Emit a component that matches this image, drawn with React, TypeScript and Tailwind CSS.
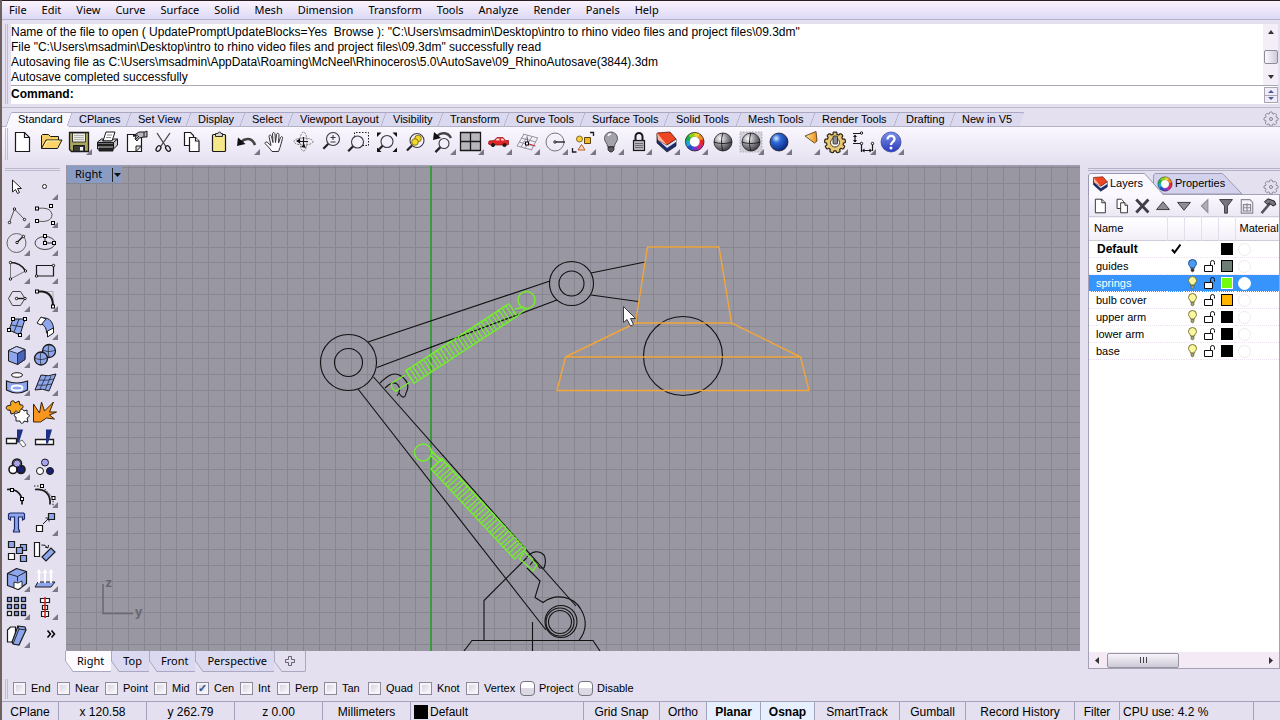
import React from "react";

const menus = ["File", "Edit", "View", "Curve", "Surface", "Solid", "Mesh", "Dimension", "Transform", "Tools", "Analyze", "Render", "Panels", "Help"];

const history = [
  'Name of the file to open ( UpdatePromptUpdateBlocks=Yes  Browse ): "C:\\Users\\msadmin\\Desktop\\intro to rhino video files and project files\\09.3dm"',
  'File "C:\\Users\\msadmin\\Desktop\\intro to rhino video files and project files\\09.3dm" successfully read',
  "Autosaving file as C:\\Users\\msadmin\\AppData\\Roaming\\McNeel\\Rhinoceros\\5.0\\AutoSave\\09_RhinoAutosave(3844).3dm",
  "Autosave completed successfully",
];

const toolTabs: [string, string][] = [
  ["Standard", "w-[61px]"],
  ["CPlanes", "w-[59px]"],
  ["Set View", "w-[60px]"],
  ["Display", "w-[54px]"],
  ["Select", "w-[48px]"],
  ["Viewport Layout", "w-[93px]"],
  ["Visibility", "w-[57px]"],
  ["Transform", "w-[66px]"],
  ["Curve Tools", "w-[76px]"],
  ["Surface Tools", "w-[84px]"],
  ["Solid Tools", "w-[72px]"],
  ["Mesh Tools", "w-[74px]"],
  ["Render Tools", "w-[84px]"],
  ["Drafting", "w-[56px]"],
  ["New in V5", "w-[68px]"],
];

type IconDef = { name: string; menu?: boolean; art: React.ReactNode };

function IconButton({ icon }: { icon: IconDef }) {
  return (
    <button type="button" aria-label={icon.name} className="size-7 shrink-0">
      <svg viewBox="0 0 28 28" className="size-7" fill="none" stroke="#1a1a1a">
        {icon.art}
        {icon.menu && <path d="M28 21v6h-6z" fill="#7b7886" stroke="none" />}
      </svg>
    </button>
  );
}

function Node({ x, y }: { x: number; y: number }) {
  return <rect x={x - 1.5} y={y - 1.5} width="3" height="3" fill="#fff" stroke="#000" />;
}
function Dot({ x, y }: { x: number; y: number }) {
  return <circle cx={x} cy={y} r="1.2" fill="#fff" stroke="#000" strokeWidth="0.9" />;
}
function Lens({ x, y, r = 6 }: { x: number; y: number; r?: number }) {
  const d = r * 0.72;
  return (
    <>
      <path d={`M${x - d} ${y + d}L${x - d - 5} ${y + d + 5}`} stroke="#222" strokeWidth="2.2" />
      <circle cx={x} cy={y} r={r} fill="#f3effa" stroke="#3b3b44" strokeWidth="1.1" />
    </>
  );
}
function ColorWheel({ cx, cy, r, w }: { cx: number; cy: number; r: number; w: number }) {
  const colors = ["#f2d21c", "#f08a1c", "#e5262a", "#d81e8c", "#7a35c8", "#2750d8", "#16a8d8", "#18b04a", "#8ad01c"];
  return (
    <>
      <circle cx={cx} cy={cy} r={r - w / 2} stroke="#555" strokeWidth="0.6" fill="#fff" />
      {colors.map((c, i) => {
        const a0 = (-95 + i * 40) * (Math.PI / 180);
        const a1 = (-52 + i * 40) * (Math.PI / 180);
        return (
          <path
            key={c}
            d={`M${cx + r * Math.cos(a0)} ${cy + r * Math.sin(a0)}A${r} ${r} 0 0 1 ${cx + r * Math.cos(a1)} ${cy + r * Math.sin(a1)}`}
            stroke={c}
            strokeWidth={w}
          />
        );
      })}
      <circle cx={cx} cy={cy} r={r + w / 2} stroke="#222" strokeWidth="0.8" />
    </>
  );
}
function LayerStack() {
  return (
    <>
      <path d="M5 6v9l10 9 9-6v-7z" fill="#1c2c6e" stroke="#222" strokeWidth="0.8" />
      <path d="M6 12l9 8 9-6v-3l-9 6-8-5z" fill="#dfe4f2" stroke="none" />
      <path d="M5 5l13-1 6 7-9 6-9-5z" fill="#ee4622" stroke="#5a1a10" strokeWidth="0.8" />
      <path d="M5 5l10 12-9-5z" fill="#f9b8a4" stroke="none" />
    </>
  );
}
function PageIcon() {
  return (
    <>
      <path d="M7.500 4.500h9l5 5v14h-14z" fill="#fff" strokeWidth="1.200" />
      <path d="M16.500 4.500v5h5" strokeWidth="1.200" />
    </>
  );
}
function CopyIcon() {
  return (
    <g fill="#fff" strokeWidth="1.200">
      <path d="M8.500 4.500h6l3 3v10h-9z" />
      <path d="M13.500 9.500h6l3.500 3.500v10.500h-9.500z" />
      <path d="M19.500 9.500v3.500h3.500" />
    </g>
  );
}
function Ball({ fill }: { fill: string }) {
  return <circle cx="15" cy="14" r="9" fill={fill} stroke="#1c1c22" strokeWidth="0.8" />;
}
function Gear({ cx, cy, r, teeth }: { cx: number; cy: number; r: number; teeth: number }) {
  const pitch = (Math.PI * 2) / teeth;
  const profile: [number, number][] = [
    [-0.34, 0.8],
    [-0.26, 0.96],
    [-0.16, 1],
    [0.16, 1],
    [0.26, 0.96],
    [0.34, 0.8],
  ];
  const pts: string[] = [];
  for (let k = 0; k < teeth; k++) {
    for (const [offset, scale] of profile) {
      const a = (k + offset) * pitch - Math.PI / 2;
      pts.push(`${cx + r * scale * Math.cos(a)},${cy + r * scale * Math.sin(a)}`);
    }
  }
  return <polygon points={pts.join(" ")} strokeLinejoin="round" />;
}

const toolbar: IconDef[] = [
  { name: "New", art: <PageIcon /> },
  {
    name: "Open",
    art: (
      <g strokeLinejoin="round">
        <path d="M5.500 20.500v-13l1-1h6l2 2h8v4" fill="#f6cf62" />
        <path d="M5.500 20.500l4.500-8.500h16l-4.500 8.500z" fill="#fcd368" />
        <path d="M8 19l3-6h12" stroke="#fff0b8" />
      </g>
    ),
  },
  {
    name: "Save",
    menu: true,
    art: (
      <>
        <path d="M5.500 4.500h19v19h-17l-2-2z" fill="#aaa55e" strokeWidth="1.300" />
        <path d="M8.500 5h13v9h-13z" fill="#ecebe4" strokeWidth="0.800" />
        <path d="M10 7.500h10M10 9.500h10M10 11.500h10" stroke="#a8a8a0" strokeWidth="0.800" />
        <path d="M9.500 17.500h11v6h-11z" fill="#3a3a34" />
        <path d="M16 19h3v3.500h-3z" fill="#eee" stroke="none" />
      </>
    ),
  },
  {
    name: "Print",
    art: (
      <g strokeLinejoin="round">
        <path d="M11 13l3-9h9l-3 9z" fill="#fff" />
        <path d="M15 7h5M14 9.500h5" stroke="#888" />
        <path d="M5.500 14l4-3h2l-1 2h9l2-2h4v6l-4 4h-16z" fill="#c8c8cc" />
        <path d="M5.500 14.500h16l4-3.500M21.500 14.500v6.500" />
        <path d="M5.500 16h16v2h-16zM7 20h14v3h-14z" fill="#222" />
      </g>
    ),
  },
  {
    name: "Document properties",
    art: (
      <>
        <path d="M7.500 6.500h14v17h-14z" fill="#fff" strokeWidth="1.200" />
        <path d="M16 23.500l5.500-5.500h-5.500z" fill="#ddd" />
        <path d="M13 8l6-4h6l2-1v6h-3l-5 1-2 3-2-2 1-3z" fill="#b9b7c0" />
        <path d="M13 8l5-1M16 11l3-3M24 4v5" />
      </>
    ),
  },
  {
    name: "Cut",
    art: (
      <>
        <path d="M9 5l8.500 13M22 5l-9 13" stroke="#444" strokeWidth="1.300" />
        <ellipse cx="10.500" cy="20.500" rx="2" ry="3" transform="rotate(35 10.500 20.500)" strokeWidth="1.300" />
        <ellipse cx="20" cy="20.500" rx="2" ry="3" transform="rotate(-35 20 20.500)" strokeWidth="1.300" />
      </>
    ),
  },
  { name: "Copy", art: <CopyIcon /> },
  {
    name: "Paste",
    art: (
      <>
        <rect x="8.500" y="6.500" width="13" height="17" rx="1" fill="#f7e98a" strokeWidth="1.200" />
        <path d="M11.500 8.500v-3h2.500a1.500 1.500 0 0 1 3 0h1.500v3z" fill="#d8d4dc" strokeWidth="0.900" />
      </>
    ),
  },
  {
    name: "Undo",
    menu: true,
    art: (
      <>
        <path d="M9 14c4-4 11-5 14 3" strokeWidth="2.600" stroke="#444" />
        <path d="M5 18l1-8.500 7.500 6.500z" fill="#111" stroke="none" />
      </>
    ),
  },
  {
    name: "Pan",
    art: (
      <path
        d="M12 23.500c-2-3-5-6-7-8 0-2 2-2 3-.5l3 2.500-2-9c0-2 2-2 2.500 0l1.500 6-.5-8.500c0-2 2-2 2.500 0l.5 8.500 1-8c.5-2 2.500-1.500 2.500.5l-.5 8 2-5.500c1-1.500 2.500-1 2 1l-2.500 9-1.500 4z"
        fill="#fbf9ff"
        stroke="#333"
        strokeLinejoin="round"
      />
    ),
  },
  {
    name: "Rotate view",
    art: (
      <>
        <ellipse cx="15.500" cy="13.500" rx="9.500" ry="3.500" stroke="#777" strokeDasharray="2 1" />
        <ellipse cx="15.500" cy="13.500" rx="3.500" ry="9.500" stroke="#777" strokeDasharray="2 1" />
        <path d="M15.500 9v9M11 13.500h9" strokeWidth="1.200" />
        <path d="M8 13l4-2.500v5zM18 20l-5-1 3-3z" fill="#111" stroke="none" />
      </>
    ),
  },
  {
    name: "Zoom dynamic",
    art: (
      <>
        <Lens x={17} y={11} r={6.500} />
        <path d="M17 7v5M14.500 9.500h5M14.500 14h5" stroke="#333" />
      </>
    ),
  },
  {
    name: "Zoom window",
    art: (
      <>
        <path d="M10.500 12v-7.500h14v13h-6" strokeDasharray="1.500 1.500" />
        <Lens x={13.500} y={14} />
      </>
    ),
  },
  {
    name: "Zoom extents",
    art: (
      <>
        <Lens x={15} y={13.500} />
        <path d="M5 4.500h4.500l-4.500 4.500zM25 4.500h-4.500l4.500 4.500zM5 24v-4.500l4.500 4.500zM25 24v-4.500l-4.500 4.500z" fill="#111" stroke="none" />
      </>
    ),
  },
  {
    name: "Zoom selected",
    art: (
      <>
        <Lens x={17} y={12.500} r={7} />
        <circle cx="18" cy="10.500" r="3.300" fill="#f4d92c" stroke="#6a5c00" strokeWidth="0.800" />
        <circle cx="15" cy="14" r="3.300" fill="#f4d92c" stroke="#6a5c00" strokeWidth="0.800" />
      </>
    ),
  },
  {
    name: "Undo view",
    menu: true,
    art: (
      <>
        <Lens x={16} y={15.500} r={5} />
        <path d="M9 8c4-4 11-4 14 2" strokeWidth="2.400" stroke="#444" />
        <path d="M5 12l1-8 7 6z" fill="#111" stroke="none" />
      </>
    ),
  },
  {
    name: "Four viewports",
    menu: true,
    art: (
      <>
        <path d="M4.500 4.500h20v18h-20z" fill="#b8b6bd" strokeWidth="1.300" />
        <path d="M14.500 4.500v18M4.500 13.500h20" strokeWidth="1.300" />
      </>
    ),
  },
  {
    name: "Named view car",
    menu: true,
    art: (
      <>
        <path d="M4.500 16l.5-3 5-.5 3-3h6l2.500 3h3v4l-2 .5h-16z" fill="#e02626" stroke="#8a1010" strokeWidth="0.700" />
        <path d="M13 10.500h2.500v2h-4zM17 10.500h2l1.500 2h-3.500z" fill="#f6d8d8" stroke="none" />
        <circle cx="9" cy="17" r="1.600" fill="#222" />
        <circle cx="20.500" cy="17" r="1.600" fill="#222" />
      </>
    ),
  },
  {
    name: "Set CPlane",
    menu: true,
    art: (
      <>
        <path d="M11 6l15 4M9 10l15 4M7 14l15 4M5 18l15 4M12 6l-7 12M16 7l-7 12M20 8.500l-7 12M25.500 10l-6 12" stroke="#8c8a96" strokeWidth="0.900" />
        <path d="M15.500 15.500v-6" stroke="#1d9a30" />
        <path d="M15.500 15.500l8 2.500" stroke="#d22" />
        <rect x="13.500" y="14" width="3" height="3" fill="#fff" stroke="#000" />
      </>
    ),
  },
  {
    name: "Circle",
    menu: true,
    art: (
      <>
        <circle cx="15" cy="14" r="9" stroke="#77757f" />
        <path d="M15 14h10" strokeWidth="1.300" />
        <Dot x={15} y={14} />
      </>
    ),
  },
  {
    name: "Select objects",
    menu: true,
    art: (
      <>
        <path d="M22 4.500h3.500v3.500M4.500 20v4h4" strokeWidth="1.300" />
        <circle cx="11.500" cy="11" r="3" fill="#f7d23a" stroke="#7a5a10" strokeWidth="0.900" />
        <path d="M16.500 9.500h6v6h-6z" fill="#f5b921" stroke="#5a4210" />
        <path d="M13.500 16.500l3.500 5.500h-7z" fill="#f9d8c0" stroke="#b06028" />
      </>
    ),
  },
  {
    name: "Hide",
    menu: true,
    art: (
      <>
        <path d="M8.500 10.500a6.500 6.500 0 1 1 13 0c0 3.500-3 4.500-3 8h-7c0-3.500-3-4.500-3-8z" fill="#a3a2aa" stroke="#55545c" />
        <path d="M12 19h6v3l-2 2h-2l-2-2z" fill="#5c5b62" strokeWidth="0.700" />
        <path d="M12 8c.5-1.500 1.500-2 3-2" stroke="#fff" strokeWidth="1.300" />
      </>
    ),
  },
  {
    name: "Lock",
    menu: true,
    art: (
      <>
        <path d="M11.500 13v-4.500a3.500 3.500 0 0 1 7 0v4.500" strokeWidth="2" />
        <rect x="9.500" y="12.500" width="11" height="10" fill="#b9b8c0" strokeWidth="1.200" />
        <path d="M11 15.500h8M11 17.500h8M11 19.500h8" stroke="#6c6b74" />
      </>
    ),
  },
  { name: "Layers", menu: true, art: <LayerStack /> },
  { name: "Properties", menu: true, art: <ColorWheel cx={14.700} cy={13.700} r={7.300} w={4} /> },
  {
    name: "Shade",
    art: (
      <>
        <Ball fill="url(#grayBall)" />
        <path d="M15 5c-2 5-2 13 0 18M6 14c5 2 13 2 18 0" strokeWidth="0.900" />
      </>
    ),
  },
  {
    name: "Shade viewport",
    menu: true,
    art: (
      <>
        <path d="M4 4h22v20h-22z" fill="#d3d0da" stroke="#a9a6b0" strokeDasharray="1.500 1.500" />
        <Ball fill="url(#grayBall)" />
        <path d="M15 5c-2 5-2 13 0 18M6 14c5 2 13 2 18 0" strokeWidth="0.900" />
      </>
    ),
  },
  { name: "Render", menu: true, art: <Ball fill="url(#blueBall)" /> },
  {
    name: "Spotlight",
    menu: true,
    art: <path d="M13 8l11-4.500 1 9.500-2.500 2z" fill="url(#coneFill)" stroke="#5a4020" strokeWidth="0.900" />,
  },
  {
    name: "Options",
    menu: true,
    art: (
      <>
        <g fill="#e8c876" stroke="#2c2410" strokeWidth="1.200">
          <Gear cx={15} cy={14.500} r={10.500} teeth={9} />
        </g>
        <circle cx="15" cy="14.500" r="4.500" fill="#fff" stroke="#4a3a18" />
        <rect x="13" y="8" width="4.500" height="8" rx="1" fill="#8d8c90" strokeWidth="0.800" />
      </>
    ),
  },
  {
    name: "Dimension",
    menu: true,
    art: (
      <>
        <path d="M5 5.500h8M7 8v6M5 15.500h8M13.500 16v8M24.500 16v7M15 22.500h8" strokeWidth="1.200" />
        <path d="M7 6.500l2 2.500h-4zM7 14.500l2-2.500h-4zM14 22.500l2.500-2v4zM24 22.500l-2.500-2v4z" fill="#111" stroke="none" />
        <Dot x={13.500} y={5} />
        <Dot x={13.500} y={15.500} />
        <Dot x={24.500} y={15.500} />
      </>
    ),
  },
  {
    name: "Help",
    menu: true,
    art: (
      <>
        <circle cx="15" cy="14" r="10" fill="url(#helpBall)" stroke="#2c3c9c" strokeWidth="0.700" />
        <path d="M11.500 11.500c0-5 7.500-4.500 7 0-.3 2.500-3.500 2.500-3.500 5.500" stroke="#fff" strokeWidth="2.300" />
        <circle cx="15" cy="20" r="1.500" fill="#fff" stroke="none" />
      </>
    ),
  },
];

const BLUE = "#8ea6ee";

const toolbox: IconDef[] = [
  { name: "Select", art: <path d="M10.500 7v12l3-2.500 2 4 2-1-2-4h4z" fill="#fff" stroke="#222" /> },
  { name: "Point", menu: true, art: <circle cx="14.500" cy="13.500" r="2" fill="#fff" stroke="#222" /> },
  {
    name: "Polyline",
    menu: true,
    art: (
      <>
        <path d="M7.500 21.500l5-13.500 10 10.500" stroke="#555" />
        <Dot x={7.500} y={21.500} />
        <Dot x={12.500} y={8} />
        <Dot x={22.500} y={18.500} />
      </>
    ),
  },
  {
    name: "Control point curve",
    menu: true,
    art: (
      <>
        <path d="M7 7.500c8-1 14 0 15 6 0 6-6 8-15 6.500" stroke="#555" />
        <Node x={7} y={7.500} />
        <Node x={21} y={5} />
        <Node x={7} y={20} />
        <Node x={23} y={22} />
      </>
    ),
  },
  {
    name: "Circle",
    menu: true,
    art: (
      <>
        <circle cx="14.500" cy="14" r="9.500" stroke="#666" />
        <path d="M15 13.500l6-6" strokeWidth="1.200" />
        <Dot x={15} y={13.500} />
        <Dot x={21.500} y={7.500} />
      </>
    ),
  },
  {
    name: "Ellipse",
    menu: true,
    art: (
      <>
        <ellipse cx="15" cy="14" rx="10" ry="6.500" stroke="#444" />
        <path d="M15 7v7h9" />
        <Node x={15} y={7} />
        <Node x={15} y={14} />
        <Node x={24} y={14} />
      </>
    ),
  },
  {
    name: "Arc",
    menu: true,
    art: (
      <>
        <path d="M23.500 14l-15 8v-16.500" stroke="#777" />
        <path d="M8.500 5.500q10 0 15 8.500" strokeWidth="1.500" />
        <Dot x={8.500} y={5.500} />
        <Dot x={23.500} y={14} />
        <Dot x={8.500} y={22} />
      </>
    ),
  },
  {
    name: "Rectangle",
    menu: true,
    art: (
      <>
        <path d="M6.500 8.500h17v10.500h-17z" strokeWidth="1.200" />
        <Dot x={23.500} y={8.500} />
        <Dot x={6.500} y={19} />
      </>
    ),
  },
  {
    name: "Polygon",
    menu: true,
    art: (
      <>
        <path d="M6.500 13.500l4-7h8l4.500 7-4.500 7h-8z" stroke="#444" />
        <path d="M14.500 13.500h8" strokeWidth="1.400" />
        <Dot x={14.500} y={13.500} />
        <Dot x={23} y={13.500} />
      </>
    ),
  },
  {
    name: "Fillet curves",
    menu: true,
    art: (
      <>
        <path d="M7 6.500h16v15" stroke="#aaa" />
        <path d="M7 6.500h5q11 1 11 15" strokeWidth="2" />
        <Node x={7} y={6.500} />
        <Node x={23} y={21.500} />
      </>
    ),
  },
  {
    name: "Surface from points",
    menu: true,
    art: (
      <>
        <path d="M11 6l12 0-5 16-11-5z" fill={BLUE} />
        <path d="M17 6l-5 13M9 12l12 2" strokeWidth="0.800" />
        <Node x={11} y={6} />
        <Node x={23} y={6} />
        <Node x={7} y={17} />
        <Node x={18} y={22} />
      </>
    ),
  },
  {
    name: "Surface from curves",
    menu: true,
    art: (
      <>
        <path d="M12 5c8-1 12 5 11.500 13l-7 2c0-6-3-9-8-10z" fill={BLUE} />
        <path d="M11 4l5 2-5 6-4-2zM23.500 15v5l-6 4v-6z" fill="#fff" />
      </>
    ),
  },
  {
    name: "Box",
    menu: true,
    art: (
      <g strokeLinejoin="round">
        <path d="M6.500 9.500l8-4 8.500 3v10l-7.500 5-9-3.500z" fill={BLUE} />
        <path d="M6.500 9.500l9 3 7.500-4-8.500-3z" fill="#c3cef8" strokeWidth="0.800" />
        <path d="M15.500 12.500v11l7.500-5v-10z" fill="#4a62b8" strokeWidth="0.800" />
      </g>
    ),
  },
  {
    name: "Boolean union",
    menu: true,
    art: (
      <>
        <circle cx="19" cy="10" r="6.500" fill={BLUE} strokeWidth="1.300" />
        <circle cx="11" cy="17.500" r="6.500" fill={BLUE} strokeWidth="1.300" />
        <path d="M5 17c4 2 8 2 12 0M11 11c-1 4-1 9 0 13M13 9c4 2 8 2 12 0M19 4c-1 3-1 8 0 12" strokeWidth="0.700" />
      </>
    ),
  },
  {
    name: "Curve from object",
    menu: true,
    art: (
      <>
        <ellipse cx="15" cy="6" rx="5.500" ry="2.300" fill="#fff" />
        <path d="M4.500 12q10 4 21 0v9q-10 6-21 0z" fill={BLUE} strokeWidth="1.200" />
        <ellipse cx="15" cy="19" rx="5.500" ry="2.500" fill={BLUE} stroke="#fff" strokeWidth="1.800" />
      </>
    ),
  },
  {
    name: "Mesh",
    menu: true,
    art: (
      <>
        <path d="M11 6q7 2 15-1l-7 17q-6-3-14-1z" fill={BLUE} />
        <path d="M9 11q7 1 15-1M7 16q7 1 15-1M16 7l-6 13M21 7l-6 14" strokeWidth="0.700" />
      </>
    ),
  },
  {
    name: "Join",
    art: (
      <g strokeLinejoin="round">
        <path d="M5 9l4-1c-2-4 3-6 4-2l4-2 1 4c4-1 4 3 1 4l1 4-4 0c-1-3-4-2-3 0l-4 1-1-4c-3 1-5-2-3-4z" fill="#f6a61c" />
        <path d="M15 16l3-1c-1-3 3-4 4-1l3-1 0 4c3 0 3 3 0 4l1 4-4-1c0 3-4 3-4 0l-4 0 0-4c-2 0-3-3 1-4z" fill="#fff" />
      </g>
    ),
  },
  { name: "Explode", art: <path d="M3.500 25v-18l6 9 2-11 3 9 9-9-4 10 7 0-7 3 5 4-8-1-6 4z" fill="#f7951e" stroke="#3a2408" /> },
  {
    name: "Trim",
    art: (
      <>
        <path d="M4.500 13.500h10v5h-10z" fill="#fff" strokeWidth="1.300" />
        <path d="M15 4.500h6l-4 13h-2z" fill="#1e2f86" stroke="none" />
        <path d="M17 17l3-2 4 5-3 2z" fill="#fff" stroke="#666" />
      </>
    ),
  },
  {
    name: "Split",
    art: (
      <>
        <path d="M5.500 14.500h18v5h-18z" fill="#fff" strokeWidth="1.300" />
        <path d="M16 4.500h6l-4 14h-2z" fill="#1e2f86" stroke="none" />
      </>
    ),
  },
  {
    name: "Group",
    menu: true,
    art: (
      <g strokeWidth="1.600">
        <circle cx="15" cy="10.500" r="4.500" fill="#fff" />
        <circle cx="11" cy="16.500" r="4" fill="#fff" />
        <circle cx="19" cy="16.500" r="4" fill="#1a1f70" />
        <circle cx="15" cy="10.500" r="3.500" fill="#a9a2ee" stroke="#111" strokeWidth="0.800" />
      </g>
    ),
  },
  {
    name: "Ungroup",
    art: (
      <>
        <circle cx="15" cy="9.500" r="3.500" fill="#a9a2ee" />
        <circle cx="10" cy="18" r="3.500" fill="#fff" />
        <circle cx="20" cy="18" r="3.500" fill="#1a1f70" />
      </>
    ),
  },
  {
    name: "Edit points",
    art: (
      <>
        <path d="M5 8.500c10-1 16 5 15 15" strokeWidth="1.700" />
        <Node x={10} y={9} />
        <Node x={20} y={18} />
      </>
    ),
  },
  {
    name: "Control points on",
    menu: true,
    art: (
      <>
        <path d="M5 8.500c10-1 16 5 15 15" strokeWidth="1.700" />
        <path d="M4 5h8l11 12v8" strokeDasharray="1.500 1.500" />
        <Node x={12} y={5} />
        <Node x={23.500} y={17} />
      </>
    ),
  },
  {
    name: "Text",
    art: <path d="M6.500 5l2-1h13l1 1v5l-2 1v-3h-4v12l1 2v1h-6v-1l1-2v-12h-4v3l-2-1z" fill={BLUE} stroke="#1c2a6a" strokeWidth="1.200" />,
  },
  {
    name: "Move",
    menu: true,
    art: (
      <>
        <path d="M13 15l6-6M19 9h-3.500M19 9v3.500" />
        <path d="M6.500 16.500h6v6h-6z" fill="#fff" strokeWidth="1.200" />
        <path d="M18.500 4.500h6v6h-6z" fill={BLUE} strokeWidth="1.200" />
      </>
    ),
  },
  {
    name: "Copy objects",
    art: (
      <g strokeWidth="1.200">
        <path d="M6.500 4.500h6v6h-6zM18.500 7.500h6v6h-6z" fill={BLUE} />
        <path d="M14.500 10.500h6v6h-6zM18.500 18.500h6v6h-6z" fill={BLUE} />
        <path d="M6.500 16.500h6v6h-6z" fill="#fff" />
      </g>
    ),
  },
  {
    name: "Rotate",
    art: (
      <>
        <path d="M4.500 5.500h5v14h-5z" fill="#fff" strokeWidth="1.200" />
        <path d="M11.500 8q4-1 6 3M18 11l-3-1M18 11l.5-3" />
        <path d="M12 20l9-9 4 4-9 9z" fill={BLUE} strokeWidth="1.200" />
      </>
    ),
  },
  {
    name: "Solid edit",
    menu: true,
    art: (
      <g strokeLinejoin="round">
        <path d="M5.500 8.500l9-5 10 3v12l-8 6-11-4z" fill={BLUE} strokeWidth="1.200" />
        <path d="M5.500 8.500l10 3 9-5M15.500 11.500v5" strokeWidth="0.900" />
        <path d="M12 17l4 1 4-2v6l-4 2.500-4-1.500z" fill="#fff" strokeWidth="0.900" />
      </g>
    ),
  },
  {
    name: "Extrude",
    menu: true,
    art: (
      <>
        <path d="M8 17h17l-4 5h-16z" fill={BLUE} />
        <path d="M9 18v-11M15 18v-11M21 18v-11" stroke="#fff" strokeWidth="1.800" />
        <path d="M9 4l2.500 4h-5zM15 4l2.500 4h-5zM21 4l2.500 4h-5z" fill="#fff" stroke="none" />
      </>
    ),
  },
  {
    name: "Array",
    menu: true,
    art: (
      <g strokeWidth="1.300">
        {[5.5, 12.5, 19.5].map((y) =>
          [5.5, 12.5, 19.5].map((x) => (
            <rect key={`${x}-${y}`} x={x} y={y - 1} width="4" height="4" fill={x === 5.5 && y === 19.5 ? "#fff" : BLUE} />
          )),
        )}
      </g>
    ),
  },
  {
    name: "Align",
    menu: true,
    art: (
      <>
        <path d="M10.500 5.500h9v4h-9zM12.500 12.500h5v4h-5zM11.500 18.500h7v5h-7z" fill="#fff" strokeWidth="1.200" />
        <path d="M15 4v21" stroke="#e02020" strokeWidth="1.600" />
      </>
    ),
  },
  {
    name: "Bend",
    menu: true,
    art: (
      <>
        <path d="M5.500 9l3-3h5v12l-3 3h-5z" fill="#fff" strokeWidth="1.200" />
        <path d="M16 5l7 1 1 3-7 15-6-1-1-2z" fill={BLUE} strokeWidth="1.200" />
        <path d="M16 5l1 3 7 1M17 8l-6 15" strokeWidth="0.900" />
      </>
    ),
  },
  {
    name: "More tools",
    art: <path d="M17.500 9.500l3 3.500-3 3.500M21.500 9.500l3 3.500-3 3.500" strokeWidth="1.500" stroke="#000" />,
  },
];

const GRID = 15.91;
const xs = Array.from({ length: 120 }, (_, i) => 431 - 23 * GRID + i * GRID);
const ys = Array.from({ length: 70 }, (_, i) => 167.5 + i * GRID);

function Spring({ x1, y1, x2, y2, half, coils }: { x1: number; y1: number; x2: number; y2: number; half: number; coils: number }) {
  const len = Math.hypot(x2 - x1, y2 - y1);
  const nx = (-(y2 - y1) / len) * half;
  const ny = ((x2 - x1) / len) * half;
  const step = 1 / coils;
  const pts: string[] = [];
  for (let i = 0; i < coils; i++) {
    const a = i * step;
    const b = a + step * 0.55;
    const ax = x1 + (x2 - x1) * a;
    const ay = y1 + (y2 - y1) * a;
    const bx = x1 + (x2 - x1) * b;
    const by = y1 + (y2 - y1) * b;
    pts.push(`M${ax + nx} ${ay + ny}L${ax - nx} ${ay - ny}L${bx - nx} ${by - ny}L${bx + nx} ${by + ny}`);
  }
  return (
    <>
      <path d={pts.join("")} strokeWidth="1.3" />
      <path d={`M${x1 + nx} ${y1 + ny}L${x2 + nx} ${y2 + ny}L${x2 - nx} ${y2 - ny}L${x1 - nx} ${y1 - ny}Z`} />
    </>
  );
}

function Drawing() {
  return (
    <svg className="absolute inset-0 h-full w-full" fill="none" role="img" aria-label="Desk lamp, right view">
      <g transform="translate(-66 -166)">
        <g stroke="#878691" strokeWidth="1" shapeRendering="crispEdges">
          {xs.map((x) => (
            <path key={x} d={`M${x} 165V1280`} />
          ))}
          {ys.map((y) => (
            <path key={y} d={`M66 ${y}H1960`} />
          ))}
        </g>
        <path d="M431 165V1280" stroke="#3b9a3b" strokeWidth="2" />
        <path d="M103 584v29.500h30" stroke="#6a6973" strokeWidth="1.500" />
        <g fill="#66656f" fontSize="13" fontWeight="bold" className="font-['Liberation_Sans',sans-serif]">
          <text x="105.500" y="587">z</text>
          <text x="135" y="616">y</text>
        </g>
        <g stroke="#111" strokeWidth="1.100">
          <circle cx="348.500" cy="362.500" r="28" />
          <circle cx="348.500" cy="362.500" r="14" />
          <circle cx="571.500" cy="283.500" r="22" />
          <circle cx="571.500" cy="283.500" r="12.500" />
          <circle cx="683" cy="356" r="39.500" />
          <path d="M368 342L550 281M377 367.500L557 300" />
          <path d="M591 273L645 262M591 295L638 301.500" />
          <path d="M358 389L546 630M373.500 377L576 606" />
          <path d="M380 383c7-7 14-12 21-7s9 10 5 17c-1 6-4 5-7 0" />
          <path d="M385 388c5-5 10-7 13-3s2 7-1 11" />
          <path d="M464 651l8-10.500h121l7 10.500M484 640v-39.500l43-43M532.500 622v29" />
          <path d="M527 557c5-6 12-7 17-2 2 4 2 8 0 13h-4l-6-8-4 5" />
          <path d="M527 568l13 13-5 16.500 8 5c13-10 31-6 38 7 7 12 5 22-2 31" />
          <circle cx="560" cy="622" r="11.500" />
          <circle cx="560" cy="622" r="14" />
          <circle cx="561" cy="621.500" r="16" />
        </g>
        <g stroke="#74ee2c" strokeWidth="1.400">
          <circle cx="526.500" cy="300" r="8.500" />
          <path d="M515 309l9-2M518 315l9-7M513 312l5 4" />
          <Spring x1={410} y1={377} x2={513} y2={310} half={7.500} coils={15} />
          <path d="M405 375l-13 8c-2 2 1 8 4 8l14-9" />
          <circle cx="423" cy="452.500" r="8.500" />
          <path d="M431 452l11 8M431 456l7 6M430 449l12 13" />
          <Spring x1={436.500} y1={464} x2={520} y2={554} half={7.500} coils={15} />
          <path d="M524 551l13 14-4 6-14-13M520 558l4-5" />
        </g>
        <g stroke="#111" strokeWidth="1" strokeDasharray="2 2" opacity="0.7">
          <path d="M430 347.500L520 314" />
          <path d="M440 452L524 547" />
        </g>
        <g stroke="#f2a63a" strokeWidth="1.400" strokeLinejoin="round">
          <path d="M647.500 247H719l12.500 76H635.500zM635.500 323L565.500 357H800.500L731.500 323M565.500 357L557 390.500H809L800.500 357" />
        </g>
        <path d="M623.500 306.500v16l3.500-3 3.500 6.500 3-1.500-3-6h5z" fill="#fff" stroke="#3a3a44" />
      </g>
    </svg>
  );
}

const layers = [
  { name: "Default", color: "bg-black", current: true },
  { name: "guides", color: "bg-[#6d7d74]", off: true },
  { name: "springs", color: "bg-[#74fa0c]", selected: true },
  { name: "bulb cover", color: "bg-[#ffb400]" },
  { name: "upper arm", color: "bg-black" },
  { name: "lower arm", color: "bg-black" },
  { name: "base", color: "bg-black" },
];

function Bulb({ off }: { off?: boolean }) {
  return (
    <svg viewBox="0 0 11 14" className="mx-auto h-3.5 w-[11px]" fill="none">
      <path d="M1.500 4.500a4 4 0 0 1 8 0c0 2-2 2.500-2 4.500h-4c0-2-2-2.500-2-4.500z" fill={off ? "#4a9cf0" : "#fbf7a0"} stroke={off ? "#1c4a90" : "#77742c"} />
      <path d="M4 9.500h3v2.500l-1.500 1-1.500-1z" fill={off ? "#333" : "#a8a45a"} stroke="#444" strokeWidth="0.500" />
    </svg>
  );
}
function OpenLock({ light }: { light?: boolean }) {
  return (
    <svg viewBox="0 0 12 14" className="mx-auto h-3.5 w-3" fill="none" stroke="#111">
      <path d="M.5 6.500h8v6h-8z" fill={light ? "#fff" : "none"} />
      <path d="M6.500 6.500v-3a2 2 0 0 1 4 0v2" />
    </svg>
  );
}
function GearButton({ label }: { label: string }) {
  return (
    <button type="button" aria-label={label} className="-my-px size-4">
      <svg viewBox="0 0 16 16" className="size-4" fill="none" stroke="#86848f">
        <Gear cx={8} cy={8} r={7} teeth={8} />
        <circle cx="8" cy="8" r="1.500" />
      </svg>
    </button>
  );
}

const layerTools: IconDef[] = [
  { name: "New layer", art: <PageIcon /> },
  { name: "New sublayer", art: <CopyIcon /> },
  { name: "Delete", art: <path d="M6 5l17 18M23 5l-17 18" strokeWidth="4" stroke="#3f3e46" /> },
  { name: "Move up", art: <path d="M14 8l9 11h-18z" fill="#8f8d98" stroke="#333" strokeWidth="1.300" /> },
  { name: "Move down", art: <path d="M14 20l9-11h-18z" fill="#8f8d98" stroke="#333" strokeWidth="1.300" /> },
  { name: "Move to parent", art: <path d="M18 5v18l-9-9z" fill="#aeacb6" stroke="#8f8d98" /> },
  { name: "Filter", art: <path d="M5 5h18l-7 9v10h-4v-10z" fill="#77757f" stroke="#333" strokeWidth="1.300" /> },
  { name: "Columns", art: <path d="M6 5h12l4 4v15h-16zM9 12h10v9h-10zM14 10v12M9 16.500h10" fill="none" stroke="#8a8892" strokeWidth="1.600" /> },
  {
    name: "Tools",
    art: (
      <>
        <path d="M5 24l12-14" strokeWidth="3.500" stroke="#55535c" />
        <path d="M9 8l5-4 9 3 2 5-4 2-5-4-3 2z" fill="#77757f" strokeWidth="1.300" />
      </>
    ),
  },
];

const osnaps: [string, string][] = [
  ["End", "w-[44px]"],
  ["Near", "w-[48px]"],
  ["Point", "w-[49px]"],
  ["Mid", "w-[42px]"],
  ["Cen", "w-[44px]"],
  ["Int", "w-[37px]"],
  ["Perp", "w-[47px]"],
  ["Tan", "w-[44px]"],
  ["Quad", "w-[51px]"],
  ["Knot", "w-[47px]"],
  ["Vertex", "w-[54px]"],
];

const views = ["Right", "Top", "Front", "Perspective"];

function Gradients() {
  return (
    <svg className="absolute size-0" aria-hidden="true">
      <defs>
        <radialGradient id="grayBall" cx="0.350" cy="0.300" r="0.800">
          <stop offset="0" stopColor="#fff" />
          <stop offset="0.500" stopColor="#8a8990" />
          <stop offset="1" stopColor="#2c2b30" />
        </radialGradient>
        <radialGradient id="blueBall" cx="0.350" cy="0.300" r="0.800">
          <stop offset="0" stopColor="#d8ecff" />
          <stop offset="0.300" stopColor="#2f6ad8" />
          <stop offset="1" stopColor="#061c70" />
        </radialGradient>
        <linearGradient id="helpBall" x1="0" y1="0" x2="0" y2="1">
          <stop offset="0" stopColor="#7c90e8" />
          <stop offset="1" stopColor="#2a3cb8" />
        </linearGradient>
        <linearGradient id="coneFill">
          <stop offset="0" stopColor="#fff0a0" />
          <stop offset="1" stopColor="#f08a18" />
        </linearGradient>
      </defs>
    </svg>
  );
}

function StatusButton({ width, on, children }: { width: string; on?: boolean; children: string }) {
  return (
    <button
      type="button"
      className={`${width} shrink-0 whitespace-nowrap border-r border-[#a3a3be] text-center ${on ? "bg-[#e6f0ff] font-bold" : ""}`}
    >
      {children}
    </button>
  );
}

export default function App() {
  return (
    <div className="flex h-screen min-h-[640px] min-w-[1024px] flex-col overflow-hidden border-l-2 border-[#6d625f] bg-[#e4e0ef] font-['Liberation_Sans',Arial,sans-serif] text-[12px] text-black">
      <Gradients />
      <nav className="flex h-5 shrink-0 items-center gap-px border-t border-b border-t-[#2a2024] border-b-[#b4b3cf] bg-linear-to-b from-[#fbf3fd] to-[#dcd9f5] pt-px font-['Noto_Sans','Open_Sans',sans-serif] text-[11px]">
        {menus.map((m) => (
          <button key={m} type="button" className="px-[7px]">
            {m}
          </button>
        ))}
      </nav>

      <section className="flex shrink-0 border-b border-[#bdbbcf] pt-1 pb-[3px]" aria-label="Command history">
        <div className="mx-[3px] w-[3px] shrink-0 border-x border-[#c0bdd0]" />
        <div className="min-w-0 flex-1 bg-white">
          <div className="flex border-b border-[#a9a7b4]">
            <div className="h-[61px] flex-1 whitespace-pre pt-px text-[12px] leading-[15px]">
              {history.map((line) => (
                <p key={line}>{line}</p>
              ))}
            </div>
            <div className="flex w-[15px] flex-col items-center justify-between bg-[#f3eef7] py-1.5">
              <svg viewBox="0 0 6 4" className="h-1 w-1.5"><path d="M0 4l3-4 3 4z" fill="#333" /></svg>
              <div className="mt-1 h-3.5 w-3.5 rounded-xs border border-[#8e8c98] bg-linear-to-r from-[#fbf9ff] to-[#cfccd8]" />
              <svg viewBox="0 0 6 4" className="h-1 w-1.5"><path d="M0 0l3 4 3-4z" fill="#333" /></svg>
            </div>
          </div>
          <div className="flex h-[18px] items-start">
            <label htmlFor="command" className="font-bold leading-4">Command:</label>
            <input id="command" className="ml-1 h-full min-w-0 flex-1 outline-none" />
            <div className="mt-px flex h-4 w-3.5 flex-col border border-[#a9a7b4] bg-[#f0edf8]">
              <button type="button" aria-label="Previous command" className="flex flex-1 items-center justify-center border-b border-[#a9a7b4]">
                <svg viewBox="0 0 6 3" className="h-[3px] w-1.5"><path d="M0 3l3-3 3 3z" fill="#4a5a9a" /></svg>
              </button>
              <button type="button" aria-label="Next command" className="flex flex-1 items-center justify-center">
                <svg viewBox="0 0 6 3" className="h-[3px] w-1.5"><path d="M0 0l3 3 3-3z" fill="#4a5a9a" /></svg>
              </button>
            </div>
          </div>
        </div>
        <div className="w-0.5" />
      </section>

      <div className="flex shrink-0 items-end pt-1 pr-px">
        <div className="flex h-3.5 flex-1 pl-2 text-[11px]" role="tablist">
          {toolTabs.map(([name, width], i) => (
            <button
              key={name}
              type="button"
              role="tab"
              aria-selected={i === 0}
              className={`${width} relative z-10 shrink-0 whitespace-nowrap pl-2 text-left leading-[15px]`}
            >
              <span
                className={`absolute inset-y-0 -left-0.5 right-0 -z-10 -skew-x-[20deg] rounded-t-xs border-t border-l border-[#a9a8c0] ${i === 0 ? "-bottom-px bg-[#fbf7ff]" : "bg-[#dbd9ef]"}`}
              />
              {name}
            </button>
          ))}
        </div>
        <GearButton label="Toolbar options" />
      </div>
      <div className="flex h-[39px] shrink-0 items-start border-t border-[#b3b1c6] bg-linear-to-b from-[#fbf7ff] to-[#e4e0ef] pt-px">
        <div className="ml-[3px] h-8 w-[3px] shrink-0 border-x border-[#c0bdd0]" />
        {toolbar.map((icon) => (
          <IconButton key={icon.name} icon={icon} />
        ))}
      </div>

      <main className="flex min-h-0 flex-1">
        <div className="w-16 shrink-0 overflow-hidden">
          <div className="mr-1.5 mb-0.5 ml-[3px] mt-[3px] h-[3px] border-y border-[#bdbacd]" />
          <div className="grid w-14 grid-cols-2">
            {toolbox.map((icon) => (
              <IconButton key={icon.name} icon={icon} />
            ))}
          </div>
        </div>

        <div className="flex min-w-0 flex-1 flex-col">
          <div className="relative min-h-0 flex-1 overflow-hidden border-t border-[#a09eb0] bg-[#9897a2]">
            <Drawing />
            <div className="relative ml-px flex h-[17px] w-[55px] items-center bg-[#8a9cc2] pl-2 font-['Noto_Sans','Open_Sans',sans-serif] text-[11px]">
              <span className="flex-1">Right</span>
              <button type="button" aria-label="Viewport menu" className="flex h-3.5 w-2.5 items-center justify-center border-l border-[#222]">
                <svg viewBox="0 0 7 4" className="h-1 w-[7px]"><path d="M0 0h7l-3.500 4z" fill="#111" /></svg>
              </button>
            </div>
          </div>
          <div className="flex h-[21px] shrink-0 font-['Noto_Sans','Open_Sans',sans-serif] text-[11px]" role="tablist">
            {views.map((v, i) => (
              <button
                key={v}
                type="button"
                role="tab"
                aria-selected={i === 0}
                className={`relative h-[21px] rounded-b-xs border-r border-b border-[#a9a8c0] pt-px pr-[7px] pl-[11px] ${i === 0 ? "bg-[#fdfbff]" : "bg-[#dbd9ef]"}`}
              >
                <svg viewBox="0 0 8 21" className="absolute top-0 -left-px h-[21px] w-2">
                  <path d="M0 10v11h8z" fill="#e4e0ef" />
                  <path d="M.5 0v10l7.500 10.500" fill="none" stroke="#a9a8c0" />
                </svg>
                {v}
              </button>
            ))}
            <button type="button" aria-label="New viewport" className="relative flex h-[21px] w-[31px] items-center justify-center rounded-b-xs border-r border-b border-[#a9a8c0]">
              <svg viewBox="0 0 8 21" className="absolute top-0 -left-px h-[21px] w-2">
                <path d="M0 10v11h8z" fill="#e4e0ef" />
                <path d="M0 10l8 10.500" fill="none" stroke="#a9a8c0" />
              </svg>
              <svg viewBox="0 0 10 10" className="size-2.5" fill="none" stroke="#66646f">
                <path d="M3.500.5h3v3h3v3h-3v3h-3v-3h-3v-3h3z" />
              </svg>
            </button>
          </div>
        </div>

        <aside className="flex w-[200px] shrink-0 flex-col pb-[3px] pl-2 text-[11px]">
          <div className="mt-[3px] h-[3px] shrink-0 border-y border-[#b4b1c6]" />
          <div className="relative z-10 mt-0.5 flex h-[21px] shrink-0 items-end justify-between">
            <div className="flex h-[21px]" role="tablist">
              <button type="button" role="tab" aria-selected="true" className="relative z-10 flex w-[65px] items-center gap-0.5 pl-1">
                <svg viewBox="0 0 65 21" className="absolute inset-0 -z-10 h-full w-full overflow-visible">
                  <path d="M.5 22V2l2-1.500h54L75 22z" fill="#fbf8ff" />
                  <path d="M.5 22V2l2-1.500h54L75 21" fill="none" stroke="#9a99b4" />
                </svg>
                <svg viewBox="3 3 22 22" className="size-4"><LayerStack /></svg>
                Layers
              </button>
              <button type="button" role="tab" aria-selected="false" className="relative flex w-[90px] items-center gap-0.5 pl-1">
                <svg viewBox="0 0 90 21" className="absolute inset-0 -z-10 h-full w-full overflow-visible">
                  <path d="M.5 12V2l2-1.500h67L89 21H9z" fill="#d3d2ec" stroke="#9a99b4" />
                </svg>
                <svg viewBox="0 0 28 28" className="size-4" fill="none"><ColorWheel cx={14} cy={14} r={10} w={5} /></svg>
                Properties
              </button>
            </div>
            <div className="flex pr-px"><GearButton label="Panel options" /></div>
          </div>
          <div className="flex min-h-0 flex-1 flex-col border border-[#a3a2b8] bg-white">
            <div className="flex h-[21px] shrink-0 items-center bg-linear-to-b from-[#fbf8ff] to-[#ece8f4]">
              {layerTools.map((t) => (
                <button key={t.name} type="button" aria-label={t.name} className="flex flex-1 justify-center">
                  <svg viewBox="0 0 28 28" className="size-5 shrink-0" fill="none" stroke="#1a1a1a" strokeWidth="1.500">{t.art}</svg>
                </button>
              ))}
            </div>
            <div className="min-h-0 flex-1 overflow-hidden">
              <table className="w-full table-fixed border-collapse">
                <colgroup>
                  <col className="w-[78px]" />
                  <col className="w-[17px]" />
                  <col className="w-[17px]" />
                  <col className="w-[17px]" />
                  <col className="w-[17px]" />
                  <col />
                </colgroup>
                <thead>
                  <tr className="h-6 border-y border-[#cfccdc] bg-linear-to-b from-white to-[#f3eff9] text-left">
                    <th scope="col" className="border-r border-[#e3dfec] pl-[5px] font-normal">Name</th>
                    <td className="border-r border-[#e3dfec]" />
                    <td className="border-r border-[#e3dfec]" />
                    <td className="border-r border-[#e3dfec]" />
                    <td className="border-r border-[#e3dfec]" />
                    <th scope="col" className="p-0 pl-1 font-normal">Material</th>
                  </tr>
                </thead>
                <tbody>
                  {layers.map((l) => (
                    <tr key={l.name} className={`h-[17px] border-b border-dotted ${l.selected ? "border-white bg-[#3794fd] text-white" : "border-[#ece2f0]"}`}>
                      <td className={`whitespace-nowrap p-0 leading-4 ${l.current ? "pl-2 text-[12px] font-bold" : "pl-[7px]"}`}>{l.name}</td>
                      <td className="p-0">
                        {l.current && (
                          <svg viewBox="0 0 10 10" className="mx-auto size-2.5" fill="none" stroke="#000" strokeWidth="2"><path d="M1 5.500l2.500 3 6-8" /></svg>
                        )}
                      </td>
                      <td className="p-0">{!l.current && <Bulb off={l.off} />}</td>
                      <td className="p-0">{!l.current && <OpenLock light={l.selected} />}</td>
                      <td className="p-0">
                        <div className={`mx-auto size-3 border ${l.selected ? "border-white" : "border-black"} ${l.color}`} />
                      </td>
                      <td className="p-0 pl-[3px]">
                        <div className={`size-[13px] rounded-full border ${l.selected ? "border-white bg-white" : "border-[#f1e8f3]"}`} />
                      </td>
                    </tr>
                  ))}
                </tbody>
              </table>
            </div>
            <div className="flex h-4 shrink-0 items-center bg-[#f4eaf6] px-1.5">
              <svg viewBox="0 0 4 7" className="h-[7px] w-1"><path d="M4 0v7l-4-3.500z" fill="#333" /></svg>
              <div className="mx-2 flex-1">
                <div className="flex h-[15px] w-[72px] items-center justify-center gap-0.5 rounded-xs border border-[#97959f] bg-linear-to-b from-[#f7f4fb] to-[#cdcad6]">
                  <span className="h-1.5 w-px bg-[#44434c]" />
                  <span className="h-1.5 w-px bg-[#44434c]" />
                  <span className="h-1.5 w-px bg-[#44434c]" />
                </div>
              </div>
              <svg viewBox="0 0 4 7" className="h-[7px] w-1"><path d="M0 0v7l4-3.500z" fill="#333" /></svg>
            </div>
          </div>
        </aside>
      </main>

      <form className="flex h-[29px] shrink-0 items-center pt-1 text-[11px]">
        <div className="mr-[5px] ml-[3px] h-5 w-[3px] border-x border-[#c0bdd0]" />
        {osnaps.map(([name, width]) => (
          <label key={name} className={`${width} flex shrink-0 items-center gap-[5px]`}>
            <input
              type="checkbox"
              defaultChecked={name === "Cen"}
              className="flex size-[13px] shrink-0 appearance-none items-center justify-center border border-[#8d8b98] bg-linear-to-br from-[#cfccda] to-white text-[11px] font-bold text-[#3c4c94] shadow-[inset_0_0_0_2px_#f6f3fa] checked:before:content-['✓']"
            />
            {name}
          </label>
        ))}
        {["Project", "Disable"].map((name) => (
          <label key={name} className="flex w-[58px] shrink-0 items-center gap-1">
            <input
              type="checkbox"
              className="size-[15px] shrink-0 appearance-none rounded-sm border border-[#77757f] bg-linear-to-b from-white from-50% to-[#dcd9e4] to-50%"
            />
            {name}
          </label>
        ))}
      </form>

      <footer className="flex h-[19px] shrink-0 border-t border-[#a3a3be] leading-[20px]">
        <StatusButton width="w-[57px]">CPlane</StatusButton>
        <StatusButton width="w-[88px]">x 120.58</StatusButton>
        <StatusButton width="w-[88px]">y 262.79</StatusButton>
        <StatusButton width="w-[88px]">z 0.00</StatusButton>
        <StatusButton width="w-[88px]">Millimeters</StatusButton>
        <button type="button" className="flex min-w-[120px] flex-1 items-center gap-0.5 border-r border-[#a3a3be] pt-0.5 pl-[3px] text-left">
          <span className="size-3.5 bg-black" />
          Default
        </button>
        <StatusButton width="w-[76px]">Grid Snap</StatusButton>
        <StatusButton width="w-[47px]">Ortho</StatusButton>
        <StatusButton width="w-[54px]" on>Planar</StatusButton>
        <StatusButton width="w-[54px]" on>Osnap</StatusButton>
        <StatusButton width="w-[85px]">SmartTrack</StatusButton>
        <StatusButton width="w-[66px]">Gumball</StatusButton>
        <StatusButton width="w-[109px]">Record History</StatusButton>
        <StatusButton width="w-[45px]">Filter</StatusButton>
        <div className="w-[134px] shrink-0 border-r border-[#a3a3be] pl-[3px]">CPU use: 4.2 %</div>
        <div className="w-[26px] shrink-0" />
      </footer>
    </div>
  );
}
